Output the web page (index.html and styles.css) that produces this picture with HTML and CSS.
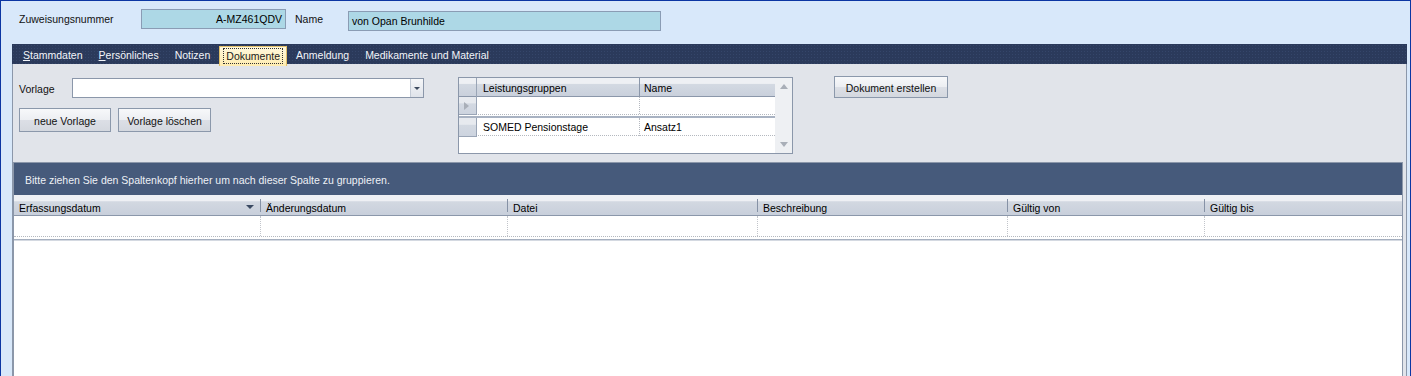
FILE: index.html
```html
<!DOCTYPE html>
<html lang="de">
<head>
  <meta charset="UTF-8" />
  <title>Zuweisung - Dokumente</title>
  <link rel="stylesheet" href="styles.css">
</head>
<body>
  <div class="window">

    <div class="topbar">
      <span class="lbl lbl-nr">Zuweisungsnummer</span>
      <div class="field field-nr">A-MZ461QDV</div>
      <span class="lbl lbl-name">Name</span>
      <div class="field field-name">von Opan Brunhilde</div>
    </div>

    <div class="main">
      <div class="tabs">
        <span class="tab"><u>S</u>tammdaten</span>
        <span class="tab"><u>P</u>ersönliches</span>
        <span class="tab">Notizen</span>
        <span class="tab active"><span class="focus">Dokumente</span></span>
        <span class="tab">Anmeldung</span>
        <span class="tab">Medikamente und Material</span>
      </div>

      <div class="panel">
        <div class="form">
          <div class="left">
            <div class="row">
              <span class="row-lbl">Vorlage</span>
              <div class="combo"><span class="combo-btn"></span></div>
            </div>
            <div class="btns">
              <button class="btn btn-new">neue Vorlage</button>
              <button class="btn btn-del">Vorlage löschen</button>
            </div>
          </div>

          <div class="mini-grid">
            <div class="mg-body">
              <div class="mg-head">
                <div class="mg-ind"></div>
                <div class="mg-cell">Leistungsgruppen</div>
                <div class="mg-cell">Name</div>
              </div>
              <div class="mg-row mg-new">
                <div class="mg-ind"><span class="arrow-right"></span></div>
                <div class="mg-cell"></div>
                <div class="mg-cell"></div>
              </div>
              <div class="mg-sep"></div>
              <div class="mg-row">
                <div class="mg-ind"></div>
                <div class="mg-cell">SOMED Pensionstage</div>
                <div class="mg-cell">Ansatz1</div>
              </div>
            </div>
            <div class="mg-scroll">
              <span class="arrow-up"></span>
              <span class="arrow-down"></span>
            </div>
          </div>

          <button class="btn btn-create">Dokument erstellen</button>
        </div>

        <div class="grid">
          <div class="group-area">Bitte ziehen Sie den Spaltenkopf hierher um nach dieser Spalte zu gruppieren.</div>
          <div class="grid-head">
            <div class="gh-cell">Erfassungsdatum<span class="sort-arrow"></span></div>
            <div class="gh-cell">Änderungsdatum</div>
            <div class="gh-cell">Datei</div>
            <div class="gh-cell">Beschreibung</div>
            <div class="gh-cell">Gültig von</div>
            <div class="gh-cell">Gültig bis</div>
          </div>
          <div class="grid-row">
            <div class="gr-cell"></div>
            <div class="gr-cell"></div>
            <div class="gr-cell"></div>
            <div class="gr-cell"></div>
            <div class="gr-cell"></div>
            <div class="gr-cell"></div>
          </div>
          <div class="grid-empty"></div>
        </div>
      </div>
    </div>

  </div>
</body>
</html>
```

FILE: styles.css
```css
* {
  margin: 0;
  padding: 0;
  box-sizing: border-box;
}

html, body {
  height: 100%;
  overflow: hidden;
}

body {
  font-family: "Liberation Sans", Arial, sans-serif;
  font-size: 10.5px;
  color: #000;
}

.window {
  height: 376px;
  border: 1px solid #0b36a3;
  border-bottom: none;
  background: #d8e8fa;
  display: flex;
  flex-direction: column;
}

/* top: number + name */
.topbar {
  height: 43px;
  flex-shrink: 0;
  display: flex;
  align-items: flex-start;
  padding-left: 18px;
}

.lbl {
  line-height: 12px;
  margin-top: 12px;
  color: #111;
}

.lbl-nr {
  width: 122px;
}

.lbl-name {
  width: 53px;
  margin-left: 9px;
}

.field {
  height: 20px;
  line-height: 19px;
  background: #add8e6;
  border: 1px solid #8a9cb4;
  white-space: nowrap;
}

.field-nr {
  width: 145px;
  margin-top: 8px;
  text-align: right;
  padding-right: 3px;
}

.field-name {
  width: 313px;
  margin-top: 10px;
  padding-left: 3px;
}

/* tabs */
.main {
  flex: 1;
  margin: 0 3px 0 11px;
  display: flex;
  flex-direction: column;
}

.tabs {
  height: 20px;
  flex-shrink: 0;
  display: flex;
  padding-left: 4px;
  background-color: #2b3a5b;
  background-image: radial-gradient(#35466a 0.7px, transparent 0.9px);
  background-size: 3px 3px;
  color: #f2f5fa;
}

.tab {
  height: 20px;
  padding: 2px 7px 0;
  margin-right: 2px;
  line-height: 18px;
  white-space: nowrap;
}

.tab.active {
  position: relative;
  z-index: 1;
  margin-top: 2px;
  height: 20px;
  line-height: 16px;
  padding: 1px 3px 0;
  color: #1a1a1a;
  background: linear-gradient(#fff8dc, #ffecb0);
  border: 1px solid #e2c06a;
  border-bottom: none;
}

.tab.active .focus {
  display: inline-block;
  padding: 1px 3px 0;
  line-height: 15px;
  outline: 1px dotted #333;
  outline-offset: -1px;
}

/* content panel */
.panel {
  flex: 1;
  display: flex;
  flex-direction: column;
  background: #e1e4ea;
  border-left: 1px solid #8b97aa;
  border-right: 1px solid #8b97aa;
}

.form {
  height: 98px;
  flex-shrink: 0;
  display: flex;
  align-items: flex-start;
}

.left {
  padding: 14px 0 0 6px;
}

.row {
  display: flex;
  align-items: center;
  height: 20px;
}

.row-lbl {
  width: 53px;
  padding-top: 1px;
  color: #111;
}

.combo {
  width: 352px;
  height: 20px;
  background: #fff;
  border: 1px solid #8b97aa;
  display: flex;
  justify-content: flex-end;
}

.combo-btn {
  width: 13px;
  border-left: 1px solid #c4cbd6;
  background: linear-gradient(#f6f7f9, #dfe3ea);
  display: flex;
  align-items: center;
  justify-content: center;
}

.combo-btn::after {
  content: "";
  border-left: 3px solid transparent;
  border-right: 3px solid transparent;
  border-top: 3px solid #3d4a5e;
  margin-top: 1px;
}

.btns {
  display: flex;
  gap: 7px;
  margin-top: 10px;
}

.btn {
  height: 24px;
  padding-top: 1px;
  font: inherit;
  color: #111;
  border: 1px solid #8b98ab;
  background: linear-gradient(#f7f8fa 0%, #eceef2 50%, #dcdfe6 51%, #d4d8df 100%);
  cursor: pointer;
}

.btn-new {
  width: 92px;
}

.btn-del {
  width: 93px;
}

.btn-create {
  width: 114px;
  height: 22px;
  margin: 12px 0 0 41px;
}

/* small grid */
.mini-grid {
  width: 335px;
  height: 77px;
  margin: 13px 0 0 34px;
  border: 1px solid #8b97aa;
  background: #fff;
  display: flex;
}

.mg-body {
  flex: 1;
  display: flex;
  flex-direction: column;
}

.mg-head,
.mg-row {
  display: grid;
  grid-template-columns: 18px 163px 1fr;
}

.mg-head {
  height: 19px;
  border-bottom: 1px solid #8b97aa;
  background: linear-gradient(#eef0f4 0%, #eef0f4 30%, #d3d9e2 36%, #c9d0dc 100%);
}

.mg-head .mg-cell {
  line-height: 18px;
  padding: 1px 0 0 6px;
  border-right: 1px solid #8b97aa;
}

.mg-head .mg-cell:last-child {
  border-right: none;
  padding-left: 4px;
}

.mg-ind {
  border-right: 1px solid #9aa5b6;
  display: flex;
  align-items: center;
  padding-left: 5px;
}

.mg-row {
  height: 18px;
  border-bottom: 1px dotted #b4b8bf;
}

.mg-row .mg-ind {
  background: linear-gradient(#e7eaef 0%, #e7eaef 35%, #d3d9e2 40%, #cdd4df 100%);
  border-bottom: 1px solid #9aa5b6;
  margin-bottom: -1px;
}

.mg-row .mg-cell {
  line-height: 17px;
  padding: 1px 0 0 6px;
  border-right: 1px dotted #b4b8bf;
  white-space: nowrap;
}

.mg-row .mg-cell:last-child {
  border-right: none;
  padding-left: 4px;
}

.mg-sep {
  height: 3px;
  border-bottom: 2px solid #a8b2c2;
}

.arrow-right {
  border-top: 4px solid transparent;
  border-bottom: 4px solid transparent;
  border-left: 5px solid #a9afb8;
}

.mg-scroll {
  width: 17px;
  background: #eef0f3;
  display: flex;
  flex-direction: column;
  justify-content: space-between;
  align-items: center;
  padding: 6px 0 6px;
}

.arrow-up {
  border-left: 4px solid transparent;
  border-right: 4px solid transparent;
  border-bottom: 5px solid #a9afb8;
}

.arrow-down {
  border-left: 4px solid transparent;
  border-right: 4px solid transparent;
  border-top: 5px solid #a9afb8;
}

/* main grid */
.grid {
  flex: 1;
  margin-right: 3px;
  border: 1px solid #8b97aa;
  border-bottom: none;
  background: #fff;
  display: flex;
  flex-direction: column;
}

.group-area {
  height: 32px;
  flex-shrink: 0;
  line-height: 32px;
  padding: 1px 0 0 11px;
  background: #465a7b;
  color: #eef1f6;
}

.grid-head,
.grid-row {
  display: grid;
  grid-template-columns: 247px 247px 250px 250px 197px 1fr;
}

.grid-head {
  height: 21px;
  border-bottom: 1px solid #8b97aa;
  background: linear-gradient(#eef0f4 0%, #eef0f4 28%, #d2d8e1 34%, #c8cfdb 100%);
}

.gh-cell {
  position: relative;
  padding: 6px 0 0 5px;
  line-height: 14px;
  white-space: nowrap;
}

.gh-cell + .gh-cell::before {
  content: "";
  position: absolute;
  left: -1px;
  top: 4px;
  bottom: 3px;
  border-left: 1px solid #8692a6;
}

.sort-arrow {
  position: absolute;
  right: 7px;
  top: 10px;
  border-left: 4px solid transparent;
  border-right: 4px solid transparent;
  border-top: 4px solid #3b4a62;
}

.grid-row {
  height: 21px;
  border-bottom: 1px dotted #b4b8bf;
}

.gr-cell {
  border-right: 1px dotted #c2c5cb;
}

.gr-cell:last-child {
  border-right: none;
}

.grid-empty {
  flex: 1;
  margin-top: 2px;
  border-top: 1px solid #a5afbf;
  box-shadow: inset 0 1px 0 #d4d9e1;
}
```
